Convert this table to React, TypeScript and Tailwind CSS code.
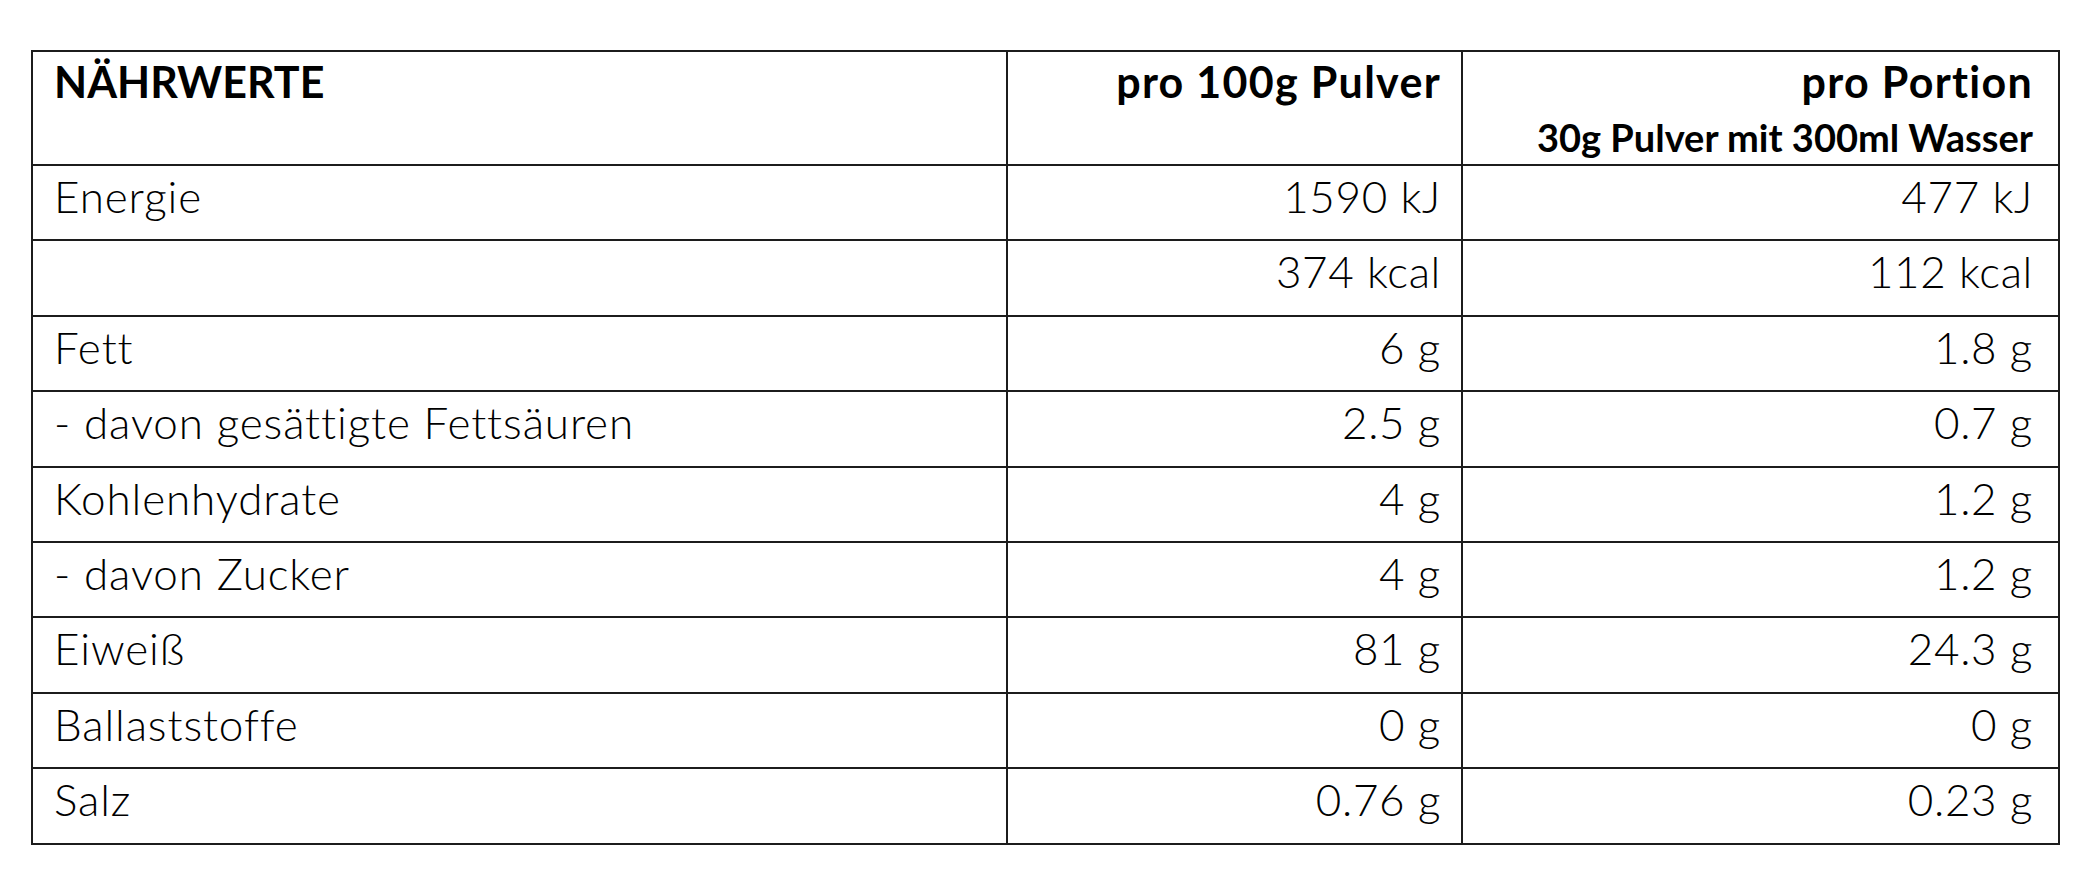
const rows = [
  { label: 'Energie', per100: '1590 kJ', perPortion: '477 kJ' },
  { label: '', per100: '374 kcal', perPortion: '112 kcal' },
  { label: 'Fett', per100: '6 g', perPortion: '1.8 g' },
  { label: '- davon gesättigte Fettsäuren', per100: '2.5 g', perPortion: '0.7 g' },
  { label: 'Kohlenhydrate', per100: '4 g', perPortion: '1.2 g' },
  { label: '- davon Zucker', per100: '4 g', perPortion: '1.2 g' },
  { label: 'Eiweiß', per100: '81 g', perPortion: '24.3 g' },
  { label: 'Ballaststoffe', per100: '0 g', perPortion: '0 g' },
  { label: 'Salz', per100: '0.76 g', perPortion: '0.23 g' },
]

export default function App() {
  return (
    <div className="w-[2088px] h-[893px] bg-white pt-[50px] pl-[31px] font-['Lato','Open_Sans',sans-serif] text-black">
      <table className="w-[2027px] border-collapse table-fixed">
        <colgroup>
          <col className="w-[975px]" />
          <col className="w-[455px]" />
          <col className="w-[597px]" />
        </colgroup>
        <thead>
          <tr className="h-[114px]">
            <th className="border-2 border-[#1c1c1c] align-top text-left font-bold text-[43px] leading-none pt-[8px] px-[21px]">
              NÄHRWERTE
            </th>
            <th className="border-2 border-[#1c1c1c] align-top text-right font-bold text-[43px] leading-none tracking-[0.03em] pt-[8px] pr-[20px]">
              pro 100g Pulver
            </th>
            <th className="border-2 border-[#1c1c1c] align-top text-right pt-[8px] pr-[25px]">
              <div className="font-bold text-[43px] leading-none tracking-[0.03em]">pro Portion</div>
              <div className="font-bold text-[38px] leading-none mt-[15px]">30g Pulver mit 300ml Wasser</div>
            </th>
          </tr>
        </thead>
        <tbody>
          {rows.map((row, i) => (
            <tr key={i} className="h-[75.4px]">
              <td className="border-2 border-[#1c1c1c] align-top text-left font-light text-[44px] leading-none tracking-[0.02em] pt-[8px] px-[21px]">
                {row.label}
              </td>
              <td className="border-2 border-[#1c1c1c] align-top text-right font-light text-[44px] leading-none tracking-[0.015em] pt-[8px] pr-[20px]">
                {row.per100}
              </td>
              <td className="border-2 border-[#1c1c1c] align-top text-right font-light text-[44px] leading-none tracking-[0.015em] pt-[8px] pr-[25px]">
                {row.perPortion}
              </td>
            </tr>
          ))}
        </tbody>
      </table>
    </div>
  )
}
